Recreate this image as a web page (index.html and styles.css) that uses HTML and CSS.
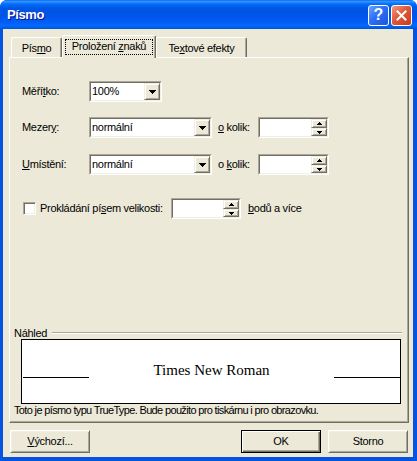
FILE: index.html
```html
<!DOCTYPE html>
<html lang="cs">
<head>
<meta charset="utf-8">
<title>Písmo</title>
<link rel="stylesheet" href="styles.css">
</head>
<body>
<div class="window">
  <div class="titlebar">
    <span class="title">Písmo</span>
    <span class="cap-btns">
      <span class="cbtn help">?</span>
      <span class="cbtn close"><svg width="11" height="11" viewBox="0 0 11 11"><path d="M1.5 1.5l8 8M9.5 1.5l-8 8" stroke="#fff" stroke-width="2" stroke-linecap="square"/></svg></span>
    </span>
  </div>
  <div class="client">
    <div class="tabs">
      <div class="tab t1">Pís<u>m</u>o</div>
      <div class="tab active"><span class="focus">Proložení <u>z</u>naků</span></div>
      <div class="tab t3">Te<u>x</u>tové efekty</div>
    </div>
    <div class="panel">
      <div class="row r1">
        <span class="lbl">Měří<u>t</u>ko:</span>
        <div class="sunken combo w-sm"><div class="sunken-in"><span class="val">100%</span><span class="raised drop"><svg width="7" height="4" viewBox="0 0 7 4"><path d="M0 0h7v1h-1v1h-1v1h-1v1h-1v-1h-1v-1h-1v-1h-1z"/></svg></span></div></div>
      </div>
      <div class="row r2">
        <span class="lbl">Mezer<u>y</u>:</span>
        <div class="sunken combo w-md"><div class="sunken-in"><span class="val">normální</span><span class="raised drop"><svg width="7" height="4" viewBox="0 0 7 4"><path d="M0 0h7v1h-1v1h-1v1h-1v1h-1v-1h-1v-1h-1v-1h-1z"/></svg></span></div></div>
        <span class="okolik"><u>o</u> kolik:</span>
        <div class="sunken spin w-spin"><div class="sunken-in"><span class="val"></span><span class="arrows"><span class="raised up"><svg width="5" height="3" viewBox="0 0 5 3"><path d="M2 0h1v1h1v1h1v1h-5v-1h1v-1h1z"/></svg></span><span class="raised dn"><svg width="5" height="3" viewBox="0 0 5 3"><path d="M0 0h5v1h-1v1h-1v1h-1v-1h-1v-1h-1z"/></svg></span></span></div></div>
      </div>
      <div class="row r3">
        <span class="lbl"><u>U</u>místění:</span>
        <div class="sunken combo w-md"><div class="sunken-in"><span class="val">normální</span><span class="raised drop"><svg width="7" height="4" viewBox="0 0 7 4"><path d="M0 0h7v1h-1v1h-1v1h-1v1h-1v-1h-1v-1h-1v-1h-1z"/></svg></span></div></div>
        <span class="okolik">o <u>k</u>olik:</span>
        <div class="sunken spin w-spin"><div class="sunken-in"><span class="val"></span><span class="arrows"><span class="raised up"><svg width="5" height="3" viewBox="0 0 5 3"><path d="M2 0h1v1h1v1h1v1h-5v-1h1v-1h1z"/></svg></span><span class="raised dn"><svg width="5" height="3" viewBox="0 0 5 3"><path d="M0 0h5v1h-1v1h-1v1h-1v-1h-1v-1h-1z"/></svg></span></span></div></div>
      </div>
      <div class="row r4">
        <span class="chk"></span>
        <span class="chk-lbl">Prokládání pí<u>s</u>em velikosti:</span>
        <div class="sunken spin w-spin2"><div class="sunken-in"><span class="val"></span><span class="arrows"><span class="raised up"><svg width="5" height="3" viewBox="0 0 5 3"><path d="M2 0h1v1h1v1h1v1h-5v-1h1v-1h1z"/></svg></span><span class="raised dn"><svg width="5" height="3" viewBox="0 0 5 3"><path d="M0 0h5v1h-1v1h-1v1h-1v-1h-1v-1h-1z"/></svg></span></span></div></div>
        <span class="after"><u>b</u>odů a více</span>
      </div>
      <div class="phead"><span class="plabel">Náhled</span><span class="etch"></span></div>
      <div class="preview">
        <span class="pline"></span>
        <span class="ptext">Times New Roman</span>
        <span class="pline"></span>
      </div>
      <div class="note">Toto je písmo typu TrueType. Bude použito pro tiskárnu i pro obrazovku.</div>
    </div>
    <div class="buttons">
      <div class="btn"><span><u>V</u>ýchozí...</span></div>
      <div class="btn ok">OK</div>
      <div class="btn storno">Storno</div>
    </div>
  </div>
</div>
</body>
</html>
```

FILE: styles.css
```css
* { box-sizing: border-box; }
html, body { margin: 0; padding: 0; background: #ffffff; }
body {
  font: 11px/13px "Liberation Sans", Arial, sans-serif;
  letter-spacing: -0.3px;
  color: #000;
}
u { text-underline-offset: 1px; }

.window {
  width: 417px;
  height: 461px;
  display: flex;
  flex-direction: column;
  background: #0553E1;
  border-radius: 7px 7px 0 0;
  overflow: hidden;
}

.titlebar {
  height: 29px;
  flex: none;
  display: flex;
  align-items: center;
  padding: 0 5px 0 7px;
  background: linear-gradient(to bottom,
    #0058EE 0px, #3A93FF 1px, #288EFF 2px, #127DFF 3px, #036FFC 4px,
    #0262EE 6px, #0057E5 8px, #0054E3 10px, #0055EB 16px, #005BF5 22px,
    #026AFE 25px, #0062EF 27px, #0052D6 29px);
}
.title {
  flex: 1;
  color: #fff;
  font: bold 13px/16px "Liberation Sans", Arial, sans-serif;
  letter-spacing: -0.4px;
  text-shadow: 1px 1px #0F1089;
  margin-top: 1px;
}
.cap-btns { display: flex; gap: 2px; margin-top: 1px; }
.cbtn {
  width: 21px;
  height: 21px;
  border: 1px solid #fff;
  border-radius: 3px;
  display: flex;
  align-items: center;
  justify-content: center;
}
.help {
  background: linear-gradient(135deg, #6AA6FF 0%, #2C6FF5 45%, #1B55E0 100%);
  color: #fff;
  font: bold 16px/1 "Liberation Sans", Arial, sans-serif;
  letter-spacing: 0;
}
.close {
  background: linear-gradient(135deg, #F3997C 0%, #E0583A 45%, #C83B1C 100%);
}

.client {
  flex: 1;
  display: flex;
  flex-direction: column;
  background: #ECE9D8;
  margin: 0 4px 4px 3px;
  padding-top: 6px;
}

.tabs {
  display: flex;
  align-items: flex-end;
  height: 22px;
  margin-left: 6px;
  padding-left: 2px;
  position: relative;
  z-index: 1;
}
.tab {
  height: 20px;
  border: 1px solid;
  border-color: #fff #716F64 transparent #fff;
  border-bottom: 0;
  border-radius: 2px 2px 0 0;
  box-shadow: inset -1px 0 #ACA899;
  padding-top: 4px;
  text-align: center;
  background: #ECE9D8;
}
.t1 { width: 51px; }
.t3 { width: 91px; }
.active {
  width: 94px;
  height: 23px;
  margin-bottom: -1px;
  padding-top: 3px;
}
.focus {
  display: inline-block;
  border: 1px dotted #000;
  padding: 0 6px 1px;
}

.panel {
  height: 366px;
  width: 400px;
  margin-left: 6px;
  border: 1px solid;
  border-color: #fff #716F64 #716F64 #fff;
  box-shadow: inset -1px -1px #ACA899;
  display: flex;
  flex-direction: column;
  padding-bottom: 5px;
}

.row {
  display: flex;
  align-items: center;
  height: 21px;
  margin-left: 12px;
}
.r1 { margin-top: 23px; }
.r2 { margin-top: 15px; }
.r3 { margin-top: 16px; }
.r4 { margin-top: 23px; margin-left: 13px; }
.lbl { width: 67px; }

.sunken {
  height: 21px;
  border: 1px solid;
  border-color: #ACA899 #fff #fff #ACA899;
}
.sunken-in {
  height: 19px;
  border: 1px solid;
  border-color: #716F64 #F1EFE2 #F1EFE2 #716F64;
  background: #fff;
  display: flex;
}
.val {
  flex: 1;
  padding-left: 1px;
  line-height: 17px;
  white-space: nowrap;
}
.raised {
  display: flex;
  align-items: center;
  justify-content: center;
  background: #ECE9D8;
  border: 1px solid;
  border-color: #F1EFE2 #716F64 #716F64 #F1EFE2;
  box-shadow: inset 1px 1px #fff, inset -1px -1px #ACA899;
}
.drop { width: 16px; height: 17px; }
.w-sm { width: 73px; }
.w-md { width: 123px; }
.w-spin { width: 71px; }
.w-spin2 { width: 70px; }
.arrows { display: flex; flex-direction: column; width: 16px; }
.up { height: 9px; }
.dn { height: 8px; }

.okolik { margin-left: 6px; width: 40px; }

.chk {
  width: 13px;
  height: 13px;
  flex: none;
  border: 1px solid;
  border-color: #ACA899 #fff #fff #ACA899;
  box-shadow: inset 1px 1px #716F64, inset -1px -1px #F1EFE2;
  background: #fff;
  margin-right: 4px;
}
.chk-lbl { width: 131px; white-space: nowrap; }
.after { margin-left: 7px; }

.phead {
  margin-top: auto;
  height: 12px;
  display: flex;
  align-items: center;
  margin-left: 4px;
  margin-right: 6px;
}
.plabel { line-height: 12px; }
.etch {
  flex: 1;
  height: 2px;
  border-top: 1px solid #ACA899;
  border-bottom: 1px solid #fff;
  margin-left: 5px;
}

.preview {
  width: 380px;
  height: 65px;
  margin-left: 11px;
  border: 1px solid #000;
  background: #fff;
  display: flex;
  justify-content: space-between;
  align-items: flex-start;
  padding-left: 1px;
}
.pline {
  width: 66px;
  height: 1px;
  background: #000;
  margin-top: 37px;
}
.ptext {
  font: 15px/17px "Liberation Serif", "Times New Roman", serif;
  letter-spacing: 0;
  margin-top: 22px;
  white-space: nowrap;
}
.note {
  height: 13px;
  margin-left: 4px;
  white-space: nowrap;
  letter-spacing: -0.65px;
}

.buttons {
  display: flex;
  height: 23px;
  margin-top: 7px;
  padding: 0 5px 0 7px;
}
.btn {
  width: 80px;
  height: 23px;
  display: flex;
  align-items: center;
  justify-content: center;
  border: 1px solid;
  border-color: #fff #716F64 #716F64 #fff;
  box-shadow: inset 1px 1px #F1EFE2, inset -1px -1px #ACA899;
  background: #ECE9D8;
}
.ok {
  margin-left: auto;
  border-color: #000;
  box-shadow: inset 1px 1px #fff, inset -1px -1px #716F64, inset -2px -2px #ACA899;
}
.storno { margin-left: 7px; }
```
